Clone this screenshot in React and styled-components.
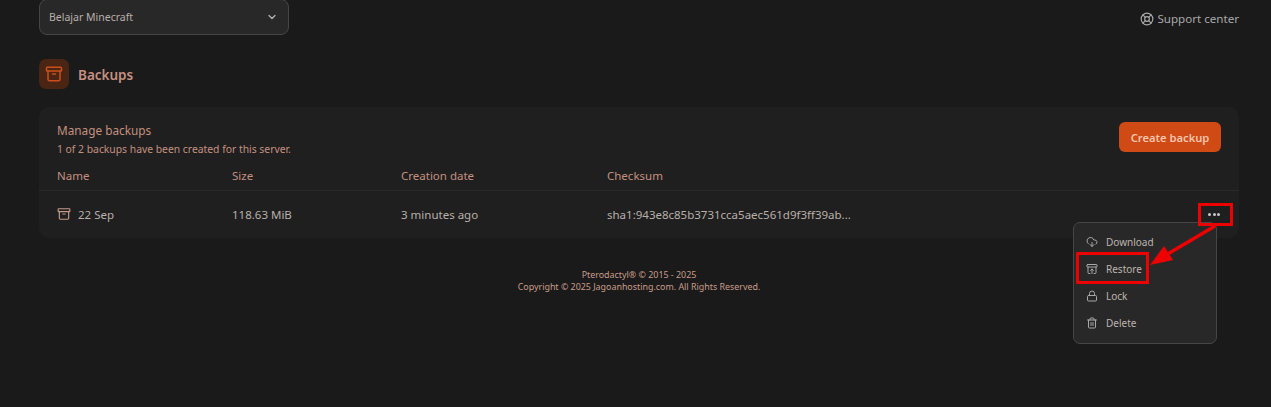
import styled, { createGlobalStyle } from 'styled-components';
import { Archive, ArchiveRestore, ChevronDown, CloudDownload, LifeBuoy, Lock, Trash2 } from 'lucide-react';

const GlobalStyle = createGlobalStyle`
  html, body {
    margin: 0;
    background: #1a1a1a;
    overflow: hidden;
    font-family: "Noto Sans", "Open Sans", sans-serif;
  }
`

const columns = [
  { label: 'Name', width: 175 },
  { label: 'Size', width: 169 },
  { label: 'Creation date', width: 206 },
  { label: 'Checksum', width: 400 },
]

const menuItems = [
  { label: 'Download', icon: CloudDownload },
  { label: 'Restore', icon: ArchiveRestore },
  { label: 'Lock', icon: Lock },
  { label: 'Delete', icon: Trash2 },
]

function App() {
  return (
    <Page>
      <GlobalStyle />
      <TopBar>
        <ServerSelect>
          Belajar Minecraft
          <ChevronDown size={12} strokeWidth={2.5} color="#b5b5b5" />
        </ServerSelect>
        <SupportLink>
          <LifeBuoy size={14} strokeWidth={2} />
          Support center
        </SupportLink>
      </TopBar>

      <PageHeading>
        <HeadingIcon>
          <Archive size={18} strokeWidth={2} />
        </HeadingIcon>
        <HeadingText>Backups</HeadingText>
      </PageHeading>

      <Panel>
        <PanelHeader>
          <div>
            <PanelTitle>Manage backups</PanelTitle>
            <PanelSubtitle>1 of 2 backups have been created for this server.</PanelSubtitle>
          </div>
          <CreateButton>Create backup</CreateButton>
        </PanelHeader>
        <TableHead>
          {columns.map((col) => (
            <HeadCell key={col.label} $width={col.width}>{col.label}</HeadCell>
          ))}
        </TableHead>
        <TableRow>
          <NameCell $width={175}>
            <Archive size={14} strokeWidth={2} color="#c49a88" />
            22 Sep
          </NameCell>
          <RowCell $width={169}>118.63 MiB</RowCell>
          <RowCell $width={206}>3 minutes ago</RowCell>
          <RowCell $width={400}>sha1:943e8c85b3731cca5aec561d9f3ff39ab...</RowCell>
          <Dots>
            <Dot /><Dot /><Dot />
          </Dots>
        </TableRow>
      </Panel>

      <Footer>
        <div>Pterodactyl® © 2015 - 2025</div>
        <div>Copyright © 2025 Jagoanhosting.com. All Rights Reserved.</div>
      </Footer>

      <Menu>
        {menuItems.map(({ label, icon: Icon }) => (
          <MenuItem key={label}>
            <Icon size={12} strokeWidth={2} color="#a8a8a8" />
            {label}
          </MenuItem>
        ))}
      </Menu>

      <Callouts width="1271" height="407" viewBox="0 0 1271 407">
        <rect x="1199.5" y="204.5" width="32" height="20" fill="none" stroke="#ee0000" strokeWidth="3" />
        <rect x="1077.5" y="253.5" width="70" height="29" fill="none" stroke="#ee0000" strokeWidth="3" />
        <line x1="1215" y1="226" x2="1166" y2="255" stroke="#ee0000" strokeWidth="3.5" />
        <polygon points="1150,265 1164,246 1173,260" fill="#ee0000" />
      </Callouts>
    </Page>
  );
}

const Page = styled.div`
  position: relative;
  width: 1200px;
  height: 407px;
  margin-left: 39px;
  overflow: visible;
`

const TopBar = styled.div`
  display: flex;
  justify-content: space-between;
  align-items: flex-start;
`

const ServerSelect = styled.div`
  box-sizing: border-box;
  width: 250px;
  height: 36px;
  margin-top: -1px;
  padding: 0 10px 0 9px;
  display: flex;
  align-items: center;
  justify-content: space-between;
  background: #282828;
  border: 1px solid #464646;
  border-radius: 8px;
  color: #b8aea8;
  font-size: 10.5px;
`

const SupportLink = styled.div`
  display: flex;
  align-items: center;
  gap: 3px;
  margin-top: 10px;
  color: #a9a9a9;
  font-size: 11.6px;
  line-height: 17px;
`

const PageHeading = styled.div`
  display: flex;
  align-items: center;
  gap: 9px;
  margin-top: 24px;
`

const HeadingIcon = styled.div`
  width: 30px;
  height: 30px;
  display: flex;
  align-items: center;
  justify-content: center;
  background: #4a2513;
  border-radius: 7px;
  color: #c9501c;
`

const HeadingText = styled.div`
  padding-top: 2px;
  color: #c49080;
  font-size: 13.5px;
  font-weight: 600;
`

const Panel = styled.div`
  margin-top: 18px;
  height: 131px;
  box-sizing: border-box;
  background: #1f1f1f;
  border-radius: 10px;
`

const PanelHeader = styled.div`
  display: flex;
  justify-content: space-between;
  align-items: flex-start;
  height: 59px;
  padding: 15px 18px 0;
  box-sizing: border-box;
`

const PanelTitle = styled.div`
  margin-top: -1px;
  color: #c49080;
  font-size: 11.8px;
  line-height: 18px;
`

const PanelSubtitle = styled.div`
  margin-top: 2px;
  color: #c49080;
  font-size: 10.35px;
  line-height: 16px;
`

const CreateButton = styled.button`
  width: 102px;
  height: 30px;
  border: 0;
  border-radius: 6px;
  background: #cf4a14;
  color: #f5c4ae;
  font-family: inherit;
  font-size: 11.2px;
  font-weight: 600;
`

const TableHead = styled.div`
  display: flex;
  height: 24px;
  padding: 0 18px;
  border-bottom: 1px solid #292929;
`

const HeadCell = styled.div`
  width: ${(props) => props.$width}px;
  color: #c49080;
  font-size: 11.5px;
  line-height: 20px;
`

const TableRow = styled.div`
  display: flex;
  align-items: center;
  height: 47px;
  padding: 0 18px 1px;
  box-sizing: border-box;
`

const RowCell = styled.div`
  width: ${(props) => props.$width}px;
  color: #b8b0aa;
  font-size: 11.5px;
`

const NameCell = styled(RowCell)`
  display: flex;
  align-items: center;
  gap: 7px;
`

const Dots = styled.div`
  margin-left: auto;
  margin-right: 1px;
  display: flex;
  gap: 1.5px;
`

const Dot = styled.span`
  width: 3px;
  height: 3px;
  border-radius: 50%;
  background: #c8c8c8;
`

const Footer = styled.div`
  margin-top: 31px;
  text-align: center;
  color: #c99c8a;
  font-size: 8.9px;
  line-height: 12px;
`

const Menu = styled.div`
  position: absolute;
  left: 1034px;
  top: 222px;
  box-sizing: border-box;
  width: 144px;
  height: 122px;
  padding: 5px 0 0 12px;
  background: #282828;
  border: 1px solid #464646;
  border-radius: 7px;
`

const MenuItem = styled.div`
  display: flex;
  align-items: center;
  gap: 8px;
  height: 27px;
  color: #bcb4ae;
  font-size: 10px;
`

const Callouts = styled.svg`
  position: absolute;
  left: -39px;
  top: 0;
  pointer-events: none;
`

export default App;
